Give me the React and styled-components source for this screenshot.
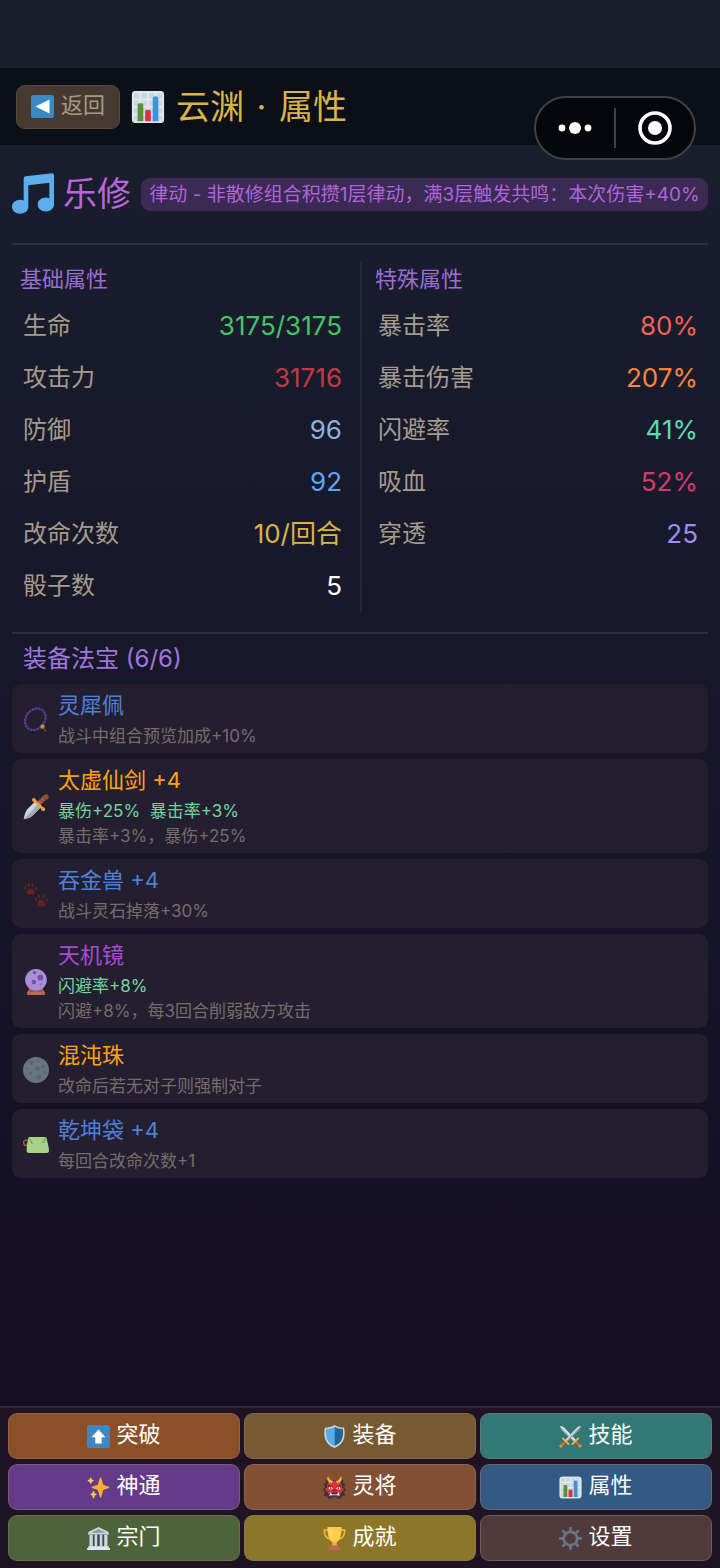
import React from 'react';
import styled, { createGlobalStyle } from 'styled-components';

const GlobalStyle = createGlobalStyle`
  * { box-sizing: border-box; }
  html { background: #150f24; }
  body { margin: 0; }
  body, button { font-family: Inter, "Noto Sans CJK SC", sans-serif; }
  h1, h2, h3, p, dl, dd, ul { margin: 0; padding: 0; font-weight: 400; }
`;

const Page = styled.div`
  position: relative;
  min-height: 100vh;
  display: flex;
  flex-direction: column;
  padding-top: 68px;
  background: linear-gradient(180deg, #1a1f2e 0%, #17182a 40%, #150f24 85%, #150f24 100%);
`;

const Svg = styled.svg`
  display: block;
  flex: none;
  width: ${p => p.$size}px;
  height: ${p => p.$size}px;
`;

const Header = styled.header`
  display: flex;
  align-items: center;
  height: 77px;
  padding: 0 16px;
  background: #0b0f17;
`;

const BackButton = styled.button`
  display: flex;
  align-items: center;
  justify-content: center;
  gap: 7px;
  width: 104px;
  height: 44px;
  padding: 0;
  border: 1px solid #5d4a37;
  border-radius: 9px;
  background: #46392f;
  color: #a69a86;
`;

const ButtonLabel = styled.span`
  padding-bottom: 4px;
  font-size: 22px;
  line-height: 32px;
`;

const Title = styled.h1`
  display: flex;
  align-items: center;
  margin-left: 11px;
  font-size: 34px;
  line-height: 44px;
  color: #d9b44a;
  white-space: pre;
`;

const TitleText = styled.span`
  margin-left: 11px;
`;

const Dot = styled.span`
  margin: 0 3px;
`;

const Capsule = styled.div`
  position: absolute;
  top: 96px;
  right: 24px;
  display: flex;
  align-items: center;
  width: 162px;
  height: 64px;
  border: 2px solid #3f4146;
  border-radius: 32px;
  background: rgba(4, 5, 10, 0.86);
`;

const CapsuleButton = styled.button`
  flex: 1;
  display: flex;
  align-items: center;
  justify-content: center;
  height: 40px;
  padding: 0;
  border: 0;
  background: none;
  & + & { border-left: 2px solid #3f4146; }
`;

const Main = styled.main`
  flex: 1;
  padding: 0 12px 24px;
`;

const ClassRow = styled.section`
  display: flex;
  align-items: center;
  height: 100px;
  border-bottom: 2px solid #302d40;
`;

const ClassName = styled.h2`
  margin: 0 10px 0 9px;
  flex: none;
  font-size: 34px;
  line-height: 44px;
  color: #b968dc;
`;

const Pill = styled.p`
  flex: 1;
  height: 33px;
  border-radius: 9px;
  background: #3b2a54;
  color: #b065d8;
  font-size: 19px;
  line-height: 33px;
  text-align: center;
  white-space: nowrap;
`;

const Stats = styled.section`
  display: grid;
  grid-template-columns: 1fr 1fr;
  padding: 17px 0 20px;
  border-bottom: 2px solid #302d40;
`;

const StatColumn = styled.div`
  padding: 0 ${p => (p.$first ? 18 : 10)}px 0 ${p => (p.$first ? 8 : 13)}px;
  & + & { border-left: 2px solid #272638; }
`;

const StatHeading = styled.h3`
  height: 38px;
  font-size: 22px;
  line-height: 34px;
  color: #9a6fd0;
`;

const StatRow = styled.div`
  display: flex;
  align-items: center;
  justify-content: space-between;
  height: 52px;
  padding-left: 3px;
`;

const StatName = styled.dt`
  font-size: 24px;
  line-height: 32px;
  color: #a59c8c;
`;

const StatValue = styled.dd`
  font-size: 26px;
  line-height: 32px;
  color: ${p => p.$color};
`;

const SectionTitle = styled.h2`
  height: 50px;
  padding-left: 11px;
  font-size: 24px;
  line-height: 50px;
  color: #a276dd;
`;

const ItemList = styled.ul`
  display: flex;
  flex-direction: column;
  gap: 6px;
  list-style: none;
`;

const Item = styled.li`
  display: flex;
  align-items: center;
  gap: 9px;
  padding: 6px 11px 4px;
  border-radius: 9px;
  background: #241f30;
`;

const ItemName = styled.h3`
  padding-bottom: 4px;
  font-size: 22px;
  line-height: 30px;
  color: ${p => p.$color};
`;

const ItemLine = styled.p`
  font-size: 17px;
  line-height: 25px;
  white-space: pre;
  color: ${p => (p.$bonus ? '#72d6a0' : '#756d6b')};
`;

const Nav = styled.nav`
  display: grid;
  grid-template-columns: repeat(3, 1fr);
  gap: 5px 4px;
  padding: 5px 8px 7px;
  border-top: 2px solid #32283f;
  background: #1e1424;
`;

const NavButton = styled.button`
  display: flex;
  align-items: center;
  justify-content: center;
  gap: 6px;
  height: 46px;
  padding: 0;
  border: 1px solid rgba(150, 115, 100, 0.55);
  border-radius: 9px;
  background: ${p => p.$color};
  color: #fff;
`;

const art = {
  back: (
    <>
      <rect width="36" height="36" rx="4" fill="#3B88C3" />
      <path fill="#FFF" d="M29 7v22L7 18z" />
    </>
  ),
  up: (
    <>
      <rect width="36" height="36" rx="4" fill="#3B88C3" />
      <path fill="#FFF" d="M18 7L7 19h6v10h10V19h6z" />
    </>
  ),
  chart: (
    <>
      <rect x="1" y="1" width="34" height="34" rx="4" fill="#CCD6DD" />
      <path fill="#E1E8ED" d="M31 1H5C2.791 1 1 2.791 1 5v26c0 2.209 1.791 4 4 4h26c2.209 0 4-1.791 4-4V5c0-2.209-1.791-4-4-4zm0 2c1.103 0 2 .897 2 2v4h-6V3h4zm-4 16h6v6h-6v-6zm0-2v-6h6v6h-6zM25 3v6h-6V3h6zm-6 8h6v6h-6v-6zm0 8h6v6h-6v-6zM17 3v6h-6V3h6zm-6 8h6v6h-6v-6zm0 8h6v6h-6v-6zM3 5c0-1.103.897-2 2-2h4v6H3V5zm0 6h6v6H3v-6zm0 8h6v6H3v-6zm2 14c-1.103 0-2-.897-2-2v-4h6v6H5zm6 0v-6h6v6h-6zm8 0v-6h6v6h-6zm12 0h-4v-6h6v4c0 1.103-.897 2-2 2z" />
      <path fill="#5C913B" d="M13 33H7V16c0-1.104.896-2 2-2h2c1.104 0 2 .896 2 2v17z" />
      <path fill="#3B94D9" d="M29 33h-6V9c0-1.104.896-2 2-2h2c1.104 0 2 .896 2 2v24z" />
      <path fill="#DD2E44" d="M21 33h-6V23c0-1.104.896-2 2-2h2c1.104 0 2 .896 2 2v10z" />
    </>
  ),
  music: (
    <path fill="#5DADEC" d="M34.209.206L11.791 2.793C10.806 2.907 10 3.811 10 4.803v18.782C9.09 23.214 8.075 23 7 23c-3.865 0-7 2.685-7 6 0 3.314 3.135 6 7 6s7-2.686 7-6V10.539l18-2.077v13.124c-.91-.372-1.925-.586-3-.586-3.865 0-7 2.685-7 6 0 3.314 3.135 6 7 6s7-2.686 7-6V1.803c0-.992-.806-1.71-1.791-1.597z" />
  ),
  beads: (
    <>
      <ellipse cx="17" cy="17" rx="13" ry="16" transform="rotate(38 17 17)" fill="none" stroke="#3b2a63" strokeWidth="2.5" />
      <ellipse cx="17" cy="17" rx="13" ry="16" transform="rotate(38 17 17)" fill="none" stroke="#583c8c" strokeWidth="3.6" strokeLinecap="round" strokeDasharray="0.1 4.4" />
      <path d="M27 28l5 6" stroke="#7a4a24" strokeWidth="1.6" />
      <circle cx="27" cy="27" r="3" fill="#c98a2c" />
    </>
  ),
  dagger: (
    <>
      <path fill="#CCD6DD" d="M1 35c1-6 2-10 5-14L17 10l8 8-12 12c-4 3-7 4-12 5z" />
      <path fill="#9cabb5" d="M1 35l20-21 4 4-12 12c-4 3-7 4-12 5z" />
      <path stroke="#a85b45" strokeWidth="6" d="M22 13l9-9" />
      <path stroke="#7d4436" strokeWidth="1.4" d="M24 7l5 5M27 4l5 5" />
      <circle cx="32" cy="4" r="3.6" fill="#8d4c3a" />
      <path stroke="#f0a236" strokeWidth="3.6" strokeLinecap="round" d="M16 9l11 11" />
      <circle cx="15" cy="8" r="2.6" fill="#f0a236" />
      <circle cx="28" cy="21" r="2.6" fill="#f0a236" />
    </>
  ),
  paws: (
    <g fill="#66221c">
      <path d="M5 15c0-3 2-6 5-6s6 3 6 6-2 2-5 2-6 1-6-2zM20 31c0-3 2-6 5-6s6 3 6 6-2 3-6 3-5 0-5-3z" />
      <ellipse cx="3" cy="8" rx="1.5" ry="2.4" />
      <ellipse cx="8" cy="4" rx="1.5" ry="2.7" />
      <ellipse cx="13" cy="4" rx="1.5" ry="2.7" />
      <ellipse cx="18" cy="9" rx="1.5" ry="2.4" />
      <ellipse cx="18" cy="24" rx="1.5" ry="2.4" />
      <ellipse cx="22" cy="20" rx="1.5" ry="2.7" />
      <ellipse cx="28" cy="20" rx="1.5" ry="2.7" />
      <ellipse cx="33" cy="25" rx="1.5" ry="2.4" />
    </g>
  ),
  ball: (
    <>
      <path fill="#bd6850" d="M9 27h18l3 5c1 2 1 4-1 4H7c-2 0-2-2-1-4z" />
      <path fill="#8e4b3c" d="M9 29h18l1 2H8z" />
      <circle cx="18" cy="15" r="15" fill="#AA8DD8" />
      <circle cx="24" cy="12" r="4" fill="#744EAA" />
      <circle cx="15" cy="18" r="3.2" fill="#744EAA" />
      <circle cx="16" cy="5" r="2.4" fill="#744EAA" />
      <circle cx="24" cy="21" r="1.4" fill="#8d68c0" />
    </>
  ),
  moon: (
    <>
      <circle cx="18" cy="18" r="18" fill="#66757F" />
      <g fill="#596873">
        <circle cx="12" cy="8" r="3" />
        <circle cx="20" cy="16" r="3" />
        <circle cx="28" cy="13" r="2.4" />
        <circle cx="10" cy="23" r="2.4" />
        <circle cx="22" cy="28" r="3.4" />
        <circle cx="21" cy="5" r="1.7" />
        <circle cx="30" cy="21" r="1.7" />
        <circle cx="5" cy="16" r="1.6" />
      </g>
    </>
  ),
  purse: (
    <>
      <path fill="none" stroke="#b6593f" strokeWidth="2" d="M8 12C3 9 0 13 1 16s4 4 5 1 3-5 4-5" />
      <path fill="#A6D388" d="M9 7h21c2 0 3 1 3 3 1 5 3 11 3 16 0 2-1 3-3 3H8c-2 0-3-1-3-3 0-6 1-11 2-16 0-2 1-3 2-3z" />
      <path fill="none" stroke="#6a9955" strokeWidth="1.4" d="M9 9l4 7M11 14l2 2M31 8l-2 5-2 2" />
    </>
  ),
  shield: (
    <>
      <path fill="#CCD6DD" d="M18 0c4 3 10 4 15 4 3 15-1 27-15 32C4 31 0 19 3 4c5 0 11-1 15-4z" />
      <path fill="#55ACEE" d="M18 3C14 5 9 6 5 6c-2 13 2 23 13 27z" />
      <path fill="#226699" d="M18 3c4 2 9 3 13 3 2 13-2 23-13 27z" />
    </>
  ),
  swords: (
    <>
      <path fill="#AAB8C2" d="M1 1l6 2 19 20-3 3L4 8z" />
      <path fill="#dce4e9" d="M1 1l6 2 19 20-2 2z" />
      <path stroke="#c1694f" strokeWidth="4" d="M26 26l6 6" />
      <path stroke="#ffac33" strokeWidth="3" strokeLinecap="round" d="M21 30l9-9" />
      <circle cx="33" cy="33" r="2.6" fill="#f4900c" />
      <g transform="matrix(-1 0 0 1 36 0)">
        <path fill="#8899A6" d="M1 1l6 2 19 20-3 3L4 8z" />
        <path fill="#CCD6DD" d="M1 1l6 2 19 20-2 2z" />
        <path stroke="#c1694f" strokeWidth="4" d="M26 26l6 6" />
        <path stroke="#ffac33" strokeWidth="3" strokeLinecap="round" d="M21 30l9-9" />
        <circle cx="33" cy="33" r="2.6" fill="#f4900c" />
      </g>
    </>
  ),
  sparkles: (
    <>
      <path fill="#FFAC33" d="M34.347 16.893l-8.899-3.294-3.323-10.891c-.128-.42-.517-.708-.956-.708-.439 0-.828.288-.956.708l-3.322 10.891-8.9 3.294c-.393.146-.653.519-.653.938 0 .418.26.793.653.938l8.895 3.293 3.324 11.223c.126.424.516.715.959.715.442 0 .833-.291.959-.716l3.324-11.223 8.896-3.293c.391-.144.652-.518.652-.937 0-.418-.261-.792-.653-.938z" />
      <path fill="#FFCC4D" d="M14.347 27.894l-2.314-.856-.9-3.3c-.118-.436-.513-.738-.964-.738-.451 0-.846.302-.965.737l-.9 3.3-2.313.856c-.393.146-.653.52-.653.938 0 .418.26.792.653.938l2.301.853.907 3.622c.112.444.511.756.97.756.459 0 .858-.312.97-.757l.907-3.622 2.301-.853c.393-.144.653-.519.653-.937 0-.418-.26-.793-.653-.937zM10.009 6.231l-2.364-.875-.876-2.365c-.145-.393-.519-.653-.938-.653-.418 0-.792.26-.938.653l-.875 2.365-2.365.875c-.393.146-.653.52-.653.938 0 .418.26.793.653.938l2.365.875.875 2.365c.146.393.52.653.938.653.418 0 .792-.26.938-.653l.875-2.365 2.365-.875c.393-.146.653-.52.653-.938 0-.418-.26-.792-.653-.938z" />
    </>
  ),
  ogre: (
    <>
      <path fill="#31373D" d="M8 4L4 7l1 3-4 3 2 4-3 5 3 3-2 6 6 1 2 4 6-1h6l6 1 2-4 6-1-2-6 3-3-3-5 2-4-4-3 1-3-4-3-6 3h-8z" />
      <path fill="#DD2E44" d="M18 8C9 8 6 13 6 19c-2-1-3 1-2 3s2 3 3 3c2 6 6 9 11 9s9-3 11-9c1 0 2-1 3-3s0-4-2-3c0-6-3-11-12-11z" />
      <path fill="#FFAC33" d="M8 0c-3 5-1 10 5 12l3-4C12 7 9 4 8 0zM28 0c3 5 1 10-5 12l-3-4c4-1 7-4 8-8z" />
      <path fill="#7c1425" d="M8 14l8 3-1 2-7-3zM28 14l-8 3 1 2 7-3z" />
      <ellipse cx="12" cy="19" rx="3" ry="2.1" fill="#ffe8b6" />
      <ellipse cx="24" cy="19" rx="3" ry="2.1" fill="#ffe8b6" />
      <circle cx="12" cy="19" r="1.2" fill="#292f33" />
      <circle cx="24" cy="19" r="1.2" fill="#292f33" />
      <path fill="#a91d33" d="M15 21h6l2 3H13z" />
      <path fill="#31373D" d="M10 28c4-3 12-3 16 0 0 3-3 5-8 5s-8-2-8-5z" />
      <path fill="#FFF" d="M10 31l2-6 2 4h8l2-4 2 6-4-1h-8z" />
    </>
  ),
  temple: (
    <>
      <path fill="#CCD6DD" d="M18 0L2 8v4h32V8z" />
      <path fill="#8899A6" d="M18 3L7 9h22z" />
      <path fill="#66757F" d="M4 12h28v19H4z" />
      <path fill="#3b4650" d="M9 12h3v19H9zM16 12h4v19h-4zM24 12h3v19h-3z" />
      <path fill="#CCD6DD" d="M4 12h5v19H4zM12 12h4v19h-4zM20 12h4v19h-4zM27 12h5v19h-5z" />
      <path fill="#E1E8ED" d="M2 30h32v3h2v3H0v-3h2z" />
    </>
  ),
  trophy: (
    <>
      <path fill="none" stroke="#FFAC33" strokeWidth="2.6" d="M8 5H2c0 8 2 12 9 14M28 5h6c0 8-2 12-9 14" />
      <path fill="#FFCC4D" d="M7 0h22c0 12-2 21-8 24v5h-6v-5C9 21 7 12 7 0z" />
      <path fill="#FFAC33" d="M15 24h6v6h-6z" />
      <path fill="#FFE8B6" opacity=".5" d="M10 3h3c0 8 1 12 3 17-4-4-6-9-6-17z" />
      <path fill="#C1694F" d="M12 29h12l2 4h2v3H8v-3h2z" />
    </>
  ),
  gear: (
    <g fill="none" stroke="#66757F">
      <circle cx="18" cy="18" r="10.5" strokeWidth="4.4" />
      <path strokeWidth="4.4" strokeLinecap="round" d="M18 2v4M18 30v4M2 18h4M30 18h4M6.7 6.700l3 3M26.300 26.300l3 3M29.300 6.700l-3 3M9.700 26.300l-3 3" />
    </g>
  ),
};

const Icon = ({ name, size }) => (
  <Svg viewBox="0 0 36 36" $size={size} aria-hidden="true">{art[name]}</Svg>
);

const baseStats = [
  ['生命', '3175/3175', '#45c464'],
  ['攻击力', '31716', '#c23b43'],
  ['防御', '96', '#8fb0dc'],
  ['护盾', '92', '#60a5f5'],
  ['改命次数', '10/回合', '#d9b44a'],
  ['骰子数', '5', '#ffffff'],
];

const specialStats = [
  ['暴击率', '80%', '#f0625a'],
  ['暴击伤害', '207%', '#f9843c'],
  ['闪避率', '41%', '#5fd9b0'],
  ['吸血', '52%', '#d23c6a'],
  ['穿透', '25', '#a08df0'],
];

const items = [
  { icon: 'beads', name: '灵犀佩', color: '#4f80d8', desc: '战斗中组合预览加成+10%' },
  { icon: 'dagger', name: '太虚仙剑 +4', color: '#ffa410', bonus: '暴伤+25%  暴击率+3%', desc: '暴击率+3%，暴伤+25%' },
  { icon: 'paws', name: '吞金兽 +4', color: '#4f80d8', desc: '战斗灵石掉落+30%' },
  { icon: 'ball', name: '天机镜', color: '#ab4ad0', bonus: '闪避率+8%', desc: '闪避+8%，每3回合削弱敌方攻击' },
  { icon: 'moon', name: '混沌珠', color: '#ffa410', desc: '改命后若无对子则强制对子' },
  { icon: 'purse', name: '乾坤袋 +4', color: '#4f80d8', desc: '每回合改命次数+1' },
];

const navItems = [
  ['up', '突破', '#8c5028'],
  ['shield', '装备', '#775932'],
  ['swords', '技能', '#327876'],
  ['sparkles', '神通', '#643b8a'],
  ['ogre', '灵将', '#825034'],
  ['chart', '属性', '#325a84'],
  ['temple', '宗门', '#4d643a'],
  ['trophy', '成就', '#8c7628'],
  ['gear', '设置', '#503a3c'],
];

const StatPanel = ({ title, stats, first }) => (
  <StatColumn $first={first}>
    <StatHeading>{title}</StatHeading>
    <dl>
      {stats.map(([name, value, color]) => (
        <StatRow key={name}>
          <StatName>{name}</StatName>
          <StatValue $color={color}>{value}</StatValue>
        </StatRow>
      ))}
    </dl>
  </StatColumn>
);

export default function App() {
  return (
    <Page>
      <GlobalStyle />
      <Header>
        <BackButton type="button">
          <Icon name="back" size={23} />
          <ButtonLabel>返回</ButtonLabel>
        </BackButton>
        <Title>
          <Icon name="chart" size={34} />
          <TitleText>云渊<Dot> · </Dot>属性</TitleText>
        </Title>
      </Header>
      <Capsule>
        <CapsuleButton type="button" aria-label="更多">
          <svg width="34" height="14" viewBox="0 0 34 14" fill="#fff">
            <circle cx="4" cy="7" r="3.4" />
            <circle cx="17" cy="7" r="6" />
            <circle cx="30" cy="7" r="3.4" />
          </svg>
        </CapsuleButton>
        <CapsuleButton type="button" aria-label="关闭">
          <svg width="34" height="34" viewBox="0 0 34 34">
            <circle cx="17" cy="17" r="15" fill="none" stroke="#fff" strokeWidth="3.6" />
            <circle cx="17" cy="17" r="7" fill="#fff" />
          </svg>
        </CapsuleButton>
      </Capsule>
      <Main>
        <ClassRow>
          <Icon name="music" size={42} />
          <ClassName>乐修</ClassName>
          <Pill>律动 - 非散修组合积攒1层律动，满3层触发共鸣：本次伤害+40%</Pill>
        </ClassRow>
        <Stats>
          <StatPanel title="基础属性" stats={baseStats} first />
          <StatPanel title="特殊属性" stats={specialStats} />
        </Stats>
        <SectionTitle>装备法宝 (6/6)</SectionTitle>
        <ItemList>
          {items.map(item => (
            <Item key={item.name}>
              <Icon name={item.icon} size={26} />
              <div>
                <ItemName $color={item.color}>{item.name}</ItemName>
                {item.bonus && <ItemLine $bonus>{item.bonus}</ItemLine>}
                <ItemLine>{item.desc}</ItemLine>
              </div>
            </Item>
          ))}
        </ItemList>
      </Main>
      <Nav>
        {navItems.map(([icon, label, color]) => (
          <NavButton type="button" key={label} $color={color}>
            <Icon name={icon} size={23} />
            <ButtonLabel>{label}</ButtonLabel>
          </NavButton>
        ))}
      </Nav>
    </Page>
  );
}
